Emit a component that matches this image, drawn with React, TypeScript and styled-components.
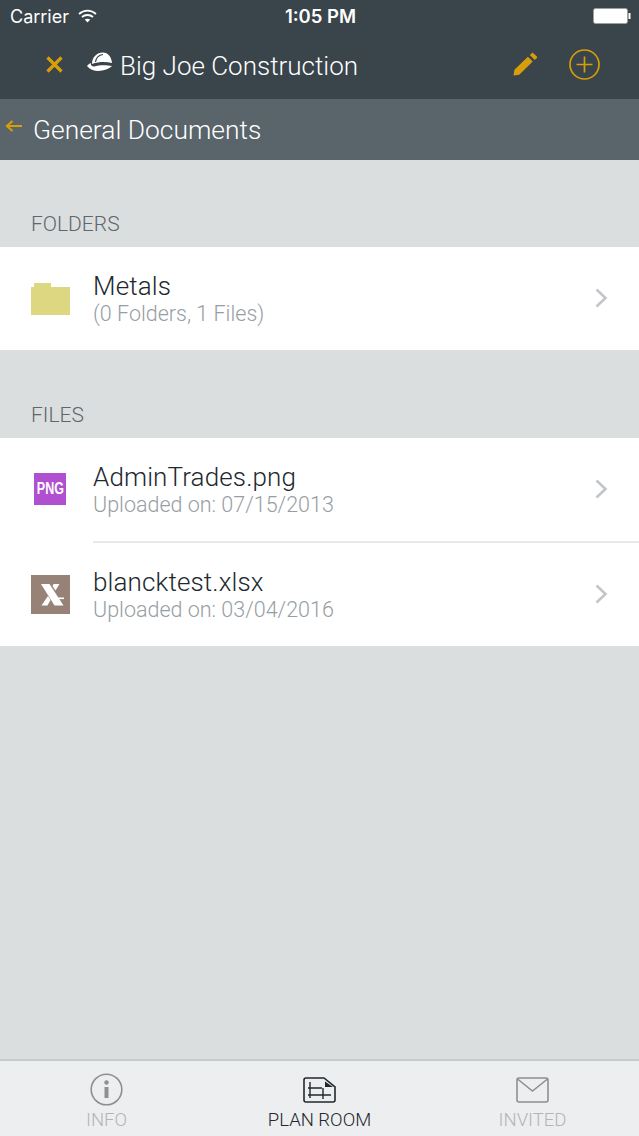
import React from "react";
import styled, { createGlobalStyle } from "styled-components";

const Global = createGlobalStyle`
  html, body { margin: 0; padding: 0; background: #dbdedf; }
  * { box-sizing: border-box; }
`;
const Page = styled.div`
  width: 639px; height: 1136px; display: flex; flex-direction: column;
  font-family: Roboto, "Liberation Sans", sans-serif; font-weight: 300; overflow: hidden; background: #dbdedf;
`;
const Header = styled.header`
  height: 99px; background: #39444b; color: #fff; display: flex; flex-direction: column;
`;
const StatusBar = styled.div`
  height: 32px; padding: 0 8px 0 10px; display: grid; grid-template-columns: 1fr auto 1fr; align-items: center;
  font-family: Inter, "Liberation Sans", sans-serif; font-weight: 400; font-size: 18px;
`;
const Carrier = styled.div`display: flex; align-items: center; gap: 9px;`;
const Time = styled.div`font-weight: 600; font-size: 18.5px;`;
const Battery = styled.div`justify-self: end; display: flex; align-items: center;`;
const NavRow = styled.div`
  flex: 1; display: flex; align-items: center; padding: 0 39px 3px 46px;
`;
const Brand = styled.div`
  margin-left: 24px; display: flex; align-items: center; gap: 8px; font-size: 26px; flex: 1; padding-top: 3px;
`;
const HatIcon = styled.svg`margin-bottom: 7px;`;
const Actions = styled.div`display: flex; align-items: center; gap: 31px;`;
const SubBar = styled.div`
  height: 61px; background: #59646b; color: #fff; display: flex; align-items: center; padding: 1px 0 0 5px; gap: 11px; font-size: 26.4px;
`;
const BackArrow = styled.svg`margin-bottom: 9px;`;
const Content = styled.main`flex: 1; display: flex; flex-direction: column;`;
const SectionTitle = styled.div<{ $h: number }>`
  height: ${(p) => p.$h}px; padding: 0 0 11px 31px; display: flex; align-items: flex-end;
  font-size: 21px; font-weight: 300; color: #5f666c; line-height: 24px;
`;
const List = styled.div`background: #fff;`;
const Row = styled.div`height: 103px; display: flex; align-items: center; padding-right: 30px;`;
const Divider = styled.div`height: 2px; margin-left: 93px; background: #e6e8e9;`;
const IconSlot = styled.div`width: 93px; padding: 0 0 1px 31px; display: flex; align-items: center;`;
const Texts = styled.div`flex: 1; display: flex; flex-direction: column; padding-top: 1px;`;
const Title = styled.div`font-size: 26px; line-height: 30px; color: #21282d; letter-spacing: 0.13px;`;
const Sub = styled.div`font-size: 21.5px; line-height: 26px; color: #979ea3;`;
const ChevronIcon = styled.svg`margin-bottom: 2px;`;
const PngBadge = styled.div`
  width: 32px; height: 32px; margin-left: 3px; background: #b04fcf; color: #fff; display: flex; align-items: center; justify-content: center;
  font-family: "Liberation Sans", sans-serif; font-weight: 700; font-size: 16px;
`;
const PngLabel = styled.span`display: inline-block; transform: scaleX(0.78);`;
const Footer = styled.nav`
  height: 77px; background: #edeef0; border-top: 2px solid #c9cccd; display: grid; grid-template-columns: repeat(3, 1fr);
`;
const Tab = styled.div<{ $active?: boolean }>`
  display: flex; flex-direction: column; align-items: center; padding-top: 12px; gap: 2px;
  font-size: 18.5px; line-height: 24px; color: ${(p) => (p.$active ? "#23282c" : "#b1b5b9")};
`;
const TabIcon = styled.div`height: 33px; display: flex; align-items: center;`;

const Chevron = () => (
  <ChevronIcon width="15" height="20" viewBox="0 0 15 20" fill="none">
    <path d="M2.5 1.5 L11.5 10 L2.5 18.5" stroke="#c3c6c9" strokeWidth="2.6" />
  </ChevronIcon>
);

const Folder = () => (
  <svg width="39" height="33" viewBox="0 0 39 33"><path d="M0 5 V33 H39 V5 H20 V1 H3 V5 Z" fill="#ded781" /></svg>
);

const ExcelIcon = () => (
  <svg width="39" height="39" viewBox="0 0 39 39">
    <rect width="39" height="39" fill="#978278" />
    <path d="M10 9 H18.5 L32.5 30.5 H23.5 Z" fill="#fff" />
    <path d="M10.5 30.5 L17 21 L19.5 25 L16.5 30.5 Z" fill="#fff" />
    <path d="M22.5 9 H28.5 L24.5 15.5 L21.5 11 Z" fill="#fff" />
    <rect x="27" y="22.5" width="6" height="1.6" fill="#fff" />
  </svg>
);

export default function App() {
  return (
    <Page>
      <Global />
      <Header>
        <StatusBar>
          <Carrier>
            Carrier
            <svg width="19" height="14" viewBox="0 0 19 14" fill="none" stroke="#fff" strokeWidth="1.8">
              <path d="M1 5 C6 0.5 13 0.5 18 5" />
              <path d="M4 8 C7 5.3 12 5.3 15 8" />
              <path d="M9.5 13.5 L6.7 10.6 C8.3 9.3 10.7 9.3 12.3 10.6 Z" fill="#fff" stroke="none" />
            </svg>
          </Carrier>
          <Time>1:05 PM</Time>
          <Battery>
            <svg width="38" height="16" viewBox="0 0 38 16">
              <rect x="0.5" y="0.5" width="34" height="15" rx="2" fill="#fff" stroke="#9aa0a4" />
              <rect x="35.5" y="5" width="2" height="6" fill="#fff" />
            </svg>
          </Battery>
        </StatusBar>
        <NavRow>
          <svg width="17" height="17" viewBox="0 0 17 17" stroke="#d69f0a" strokeWidth="3.2" fill="none">
            <path d="M1.5 1.5 L15.5 15.5 M15.5 1.5 L1.5 15.5" />
          </svg>
          <Brand>
            <HatIcon width="25" height="20" viewBox="0 0 25 20">
              <path d="M5 12 C5 5 10 0.5 16 0.5 C21 0.5 24.5 5 25 11 C19 9.5 12 9.5 5 12 Z" fill="#fff" />
              <path d="M8.5 10 C9 6 12 3 16 2.5" fill="none" stroke="#39444b" strokeWidth="1.2" />
              <path d="M0 14 C1 12.5 2.5 11.5 4 11 C3.5 13 4.5 14.5 7 14.5 C13 12.5 20 13 25 14 C20 19 6 22 0 14 Z" fill="#fff" />
            </HatIcon>
            Big Joe Construction
          </Brand>
          <Actions>
            <svg width="25" height="25" viewBox="0 0 26 25" fill="#d69f0a">
              <path d="M0.5 24 L1.5 18 L15.5 4.5 L20.5 9.5 L6.5 23.2 Z" />
              <path d="M17.5 2.5 L19.5 0.7 C20 0.3 20.8 0.3 21.2 0.7 L24.8 4.3 C25.2 4.8 25.2 5.4 24.8 5.8 L22.7 7.8 Z" />
            </svg>
            <svg width="31" height="31" viewBox="0 0 31 31" fill="none" stroke="#d69f0a" strokeWidth="1.7">
              <circle cx="15.5" cy="15.5" r="14.5" />
              <path d="M15.5 7.5 V23.5 M7.5 15.5 H23.5" />
            </svg>
          </Actions>
        </NavRow>
      </Header>
      <SubBar>
        <BackArrow width="17" height="12" viewBox="0 0 17 12" fill="none" stroke="#d69f0a" strokeWidth="2.2">
          <path d="M17 6 H2 M7.5 1 L2 6 L7.5 11" />
        </BackArrow>
        General Documents
      </SubBar>
      <Content>
        <SectionTitle $h={87}>FOLDERS</SectionTitle>
        <List>
          <Row>
            <IconSlot><Folder /></IconSlot>
            <Texts>
              <Title>Metals</Title>
              <Sub>(0 Folders, 1 Files)</Sub>
            </Texts>
            <Chevron />
          </Row>
        </List>
        <SectionTitle $h={88}>FILES</SectionTitle>
        <List>
          <Row>
            <IconSlot><PngBadge><PngLabel>PNG</PngLabel></PngBadge></IconSlot>
            <Texts>
              <Title>AdminTrades.png</Title>
              <Sub>Uploaded on: 07/15/2013</Sub>
            </Texts>
            <Chevron />
          </Row>
          <Divider />
          <Row>
            <IconSlot><ExcelIcon /></IconSlot>
            <Texts>
              <Title>blancktest.xlsx</Title>
              <Sub>Uploaded on: 03/04/2016</Sub>
            </Texts>
            <Chevron />
          </Row>
        </List>
      </Content>
      <Footer>
        <Tab>
          <TabIcon>
            <svg width="33" height="33" viewBox="0 0 33 33" fill="none">
              <circle cx="16.5" cy="16.5" r="15.3" stroke="#8d8f91" strokeWidth="1.6" />
              <circle cx="16.5" cy="9.5" r="2.2" fill="#8d8f91" />
              <rect x="14.5" y="14" width="4" height="11" fill="#8d8f91" />
            </svg>
          </TabIcon>
          INFO
        </Tab>
        <Tab $active>
          <TabIcon>
            <svg width="33" height="26" viewBox="0 0 33 26" fill="none" stroke="#23282c" strokeWidth="1.6">
              <path d="M3 1 H21 L32 10 V23 C32 24 31 25 30 25 H3 C2 25 1 24 1 23 V3 C1 2 2 1 3 1 Z" />
              <path d="M22 4.5 L30 10 H22 Z" fill="#23282c" stroke="none" />
              <path d="M7 5 V21 M5 11 H19 M5 18 H28 M20 11 V22" strokeWidth="1.4" />
            </svg>
          </TabIcon>
          PLAN ROOM
        </Tab>
        <Tab>
          <TabIcon>
            <svg width="33" height="26" viewBox="0 0 33 26" fill="none" stroke="#8d8f91" strokeWidth="1.6">
              <rect x="1" y="1" width="31" height="24" rx="2" />
              <path d="M1.5 2 L16.5 14 L31.5 2" />
            </svg>
          </TabIcon>
          INVITED
        </Tab>
      </Footer>
    </Page>
  );
}
